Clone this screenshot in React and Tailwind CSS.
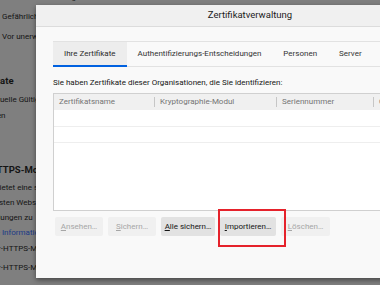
const bgLines = [
  { text: 'Gefährliche und betrügerische Inhalte blockieren', link: 'Weitere Informationen', cls: 'mt-[-9px] ml-[-5px]' },
  { text: 'Gefährliche Downloads blockieren', cls: 'mt-[5px] ml-[2px]' },
  { text: 'Vor unerwünschter und ungewöhnlicher Software warnen', cls: 'mt-[6px] ml-[2px]' },
  { text: 'Zertifikate', bold: true, cls: 'mt-[30px] ml-[-31px]' },
  { text: 'Aktuelle Gültigkeit von Zertifikaten durch Anfrage bestätigen', cls: 'mt-[5px] ml-[-12px]' },
  { text: 'Zertifikaten', cls: 'mt-[2px] ml-[-35px]' },
  { text: 'Nur-HTTPS-Modus', bold: true, cls: 'mt-[40px] ml-[-29px]' },
  { text: 'bietet eine sichere, verschlüsselte Verbindung', cls: 'mt-[4px] ml-[-5px]' },
  { text: 'ersten Websites', cls: 'mt-[1px] ml-[-8px]' },
  { text: 'Verbindungen zu', cls: 'mt-[1px] ml-[-27px]' },
  { text: 'Weitere Informationen', blue: true, cls: 'mt-[1px] ml-[-27px]' },
  { text: 'Nur-HTTPS-Modus in allen Fenstern aktivieren', cls: 'mt-[2px] ml-[-12px]' },
  { text: 'Nur-HTTPS-Modus nur in privaten Fenstern aktivieren', cls: 'mt-[5px] ml-[-12px]' },
];

const tabs = ['Ihre Zertifikate', 'Authentifizierungs-Entscheidungen', 'Personen', 'Server'];

const columns = [
  { label: 'Zertifikatsname', cls: 'w-[100px]' },
  { label: 'Kryptographie-Modul', cls: 'w-[122px]' },
  { label: 'Seriennummer', cls: 'w-[97px]' },
  { label: 'Gültig bis', cls: 'flex-1' },
];

const buttons = [
  { key: 'A', rest: 'nsehen…', enabled: false, cls: 'w-[48px]' },
  { key: 'S', rest: 'ichern…', enabled: false, cls: 'w-[48px]' },
  { key: 'A', rest: 'lle sichern…', enabled: true, cls: 'w-[54px]' },
  { key: 'I', rest: 'mportieren…', enabled: true, cls: 'w-[56px]' },
  { key: 'L', rest: 'öschen…', enabled: false, cls: 'w-[49px]' },
];

const font = { fontFamily: 'Roboto, "Noto Sans", sans-serif' };

export default function App() {
  return (
    <div className="relative w-[380px] h-[285px] overflow-hidden bg-[#7f7f7f]" style={font}>
      {/* dimmed settings page behind the dialog */}
      <div className="flex flex-col">
        {bgLines.map((l, i) => (
          <div
            key={i}
            className={`h-[14px] leading-[14px] whitespace-nowrap ${l.cls} ${
              l.bold ? 'text-[9.5px] font-bold' : 'text-[8px]'
            } ${l.blue ? 'text-[#1b3a86]' : 'text-[#141414]'}`}
          >
            {l.text}
            {l.link && <span className="ml-[8px] text-[#1b3a86]">{l.link}</span>}
          </div>
        ))}
      </div>

      {/* dialog */}
      <div className="absolute left-[36px] top-[5px] w-[428px] h-[273px] bg-[#f9f9f9] shadow-[0_2px_5px_rgba(0,0,0,0.45)] flex flex-col">
        <div className="h-[22px] shrink-0 bg-[#f0f0f0] border-b border-[#dcdcdc] flex items-center justify-center text-[9.5px] text-[#1c1c1c]">
          Zertifikatverwaltung
        </div>

        <div className="px-[17px] pt-[14px] flex flex-col">
          <div className="flex h-[26px] border-t border-b border-[#e2e2e2]">
            {tabs.map((t, i) => (
              <div
                key={t}
                className={`relative flex items-center px-[11px] text-[8px] ${
                  i === 0 ? 'bg-[#ededed] text-[#2a2a2a]' : 'text-[#333333]'
                }`}
              >
                {t}
                {i === 0 && <div className="absolute left-0 right-0 bottom-[-1px] h-[2px] bg-[#0061e0]" />}
              </div>
            ))}
          </div>

          <div className="mt-[10px] h-[12px] leading-[12px] text-[8px] text-[#151515] whitespace-nowrap">
            Sie haben Zertifikate dieser Organisationen, die Sie identifizieren:
          </div>

          <div className="mt-[4px] h-[118px] border border-[#d0d0d0] bg-white flex flex-col">
            <div className="h-[16px] shrink-0 bg-[#f0f0f0] flex items-center">
              {columns.map((c, i) => (
                <div key={c.label} className={`flex items-center h-full ${c.cls}`}>
                  {i > 0 && <div className="w-px h-[10px] bg-[#c6c6c6]" />}
                  <span className="ml-[5px] text-[8px] text-[#747474] whitespace-nowrap">{c.label}</span>
                </div>
              ))}
            </div>
            <div className="h-[16px] shrink-0" />
            <div className="h-[17px] shrink-0 border-t border-b border-[#eeeeee]" />
          </div>

          <div className="mt-[6px] flex gap-[5px] pl-[2px]">
            {buttons.map((b, i) => (
              <div
                key={i}
                className={`h-[19px] flex items-center justify-center text-[8px] rounded-[2px] whitespace-nowrap ${b.cls} ${
                  b.enabled ? 'bg-[#e2e2e2] text-[#151515]' : 'bg-[#f0f0f0] text-[#a6a6a6]'
                }`}
              >
                <span className="underline underline-offset-[1px]">{b.key}</span>
                {b.rest}
              </div>
            ))}
          </div>
        </div>
      </div>

      {/* highlight around the import button */}
      <div className="absolute left-[218px] top-[209px] w-[68px] h-[38px] border-[2px] border-[#e5222b]" />
    </div>
  );
}
